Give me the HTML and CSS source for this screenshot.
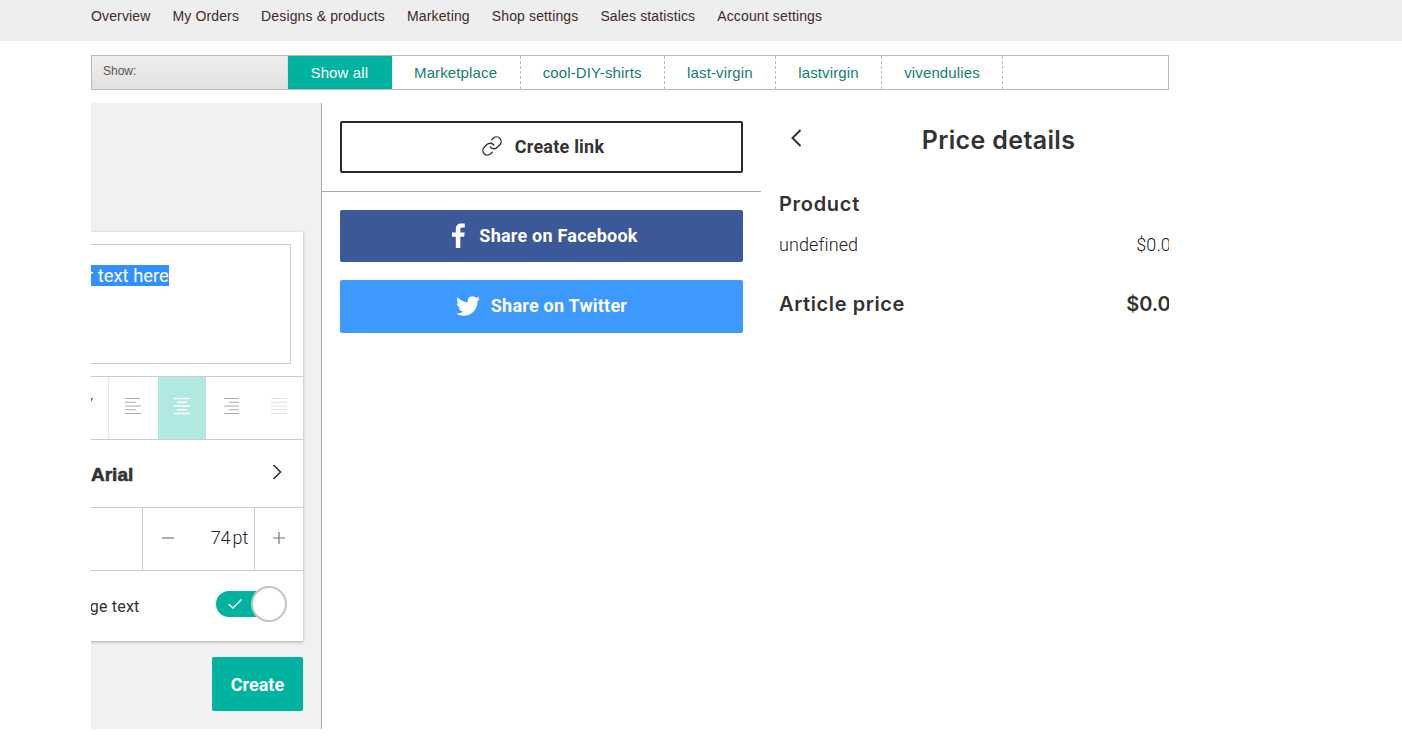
FILE: index.html
```html
<!DOCTYPE html>
<html lang="en">
<head>
<meta charset="utf-8">
<title>Create link</title>
<link rel="stylesheet" href="styles.css">
</head>
<body>
<nav class="topnav">
  <a>Overview</a><a>My Orders</a><a>Designs &amp; products</a><a>Marketing</a><a>Shop settings</a><a>Sales statistics</a><a>Account settings</a>
</nav>
<div class="page">
  <div class="filter">
    <div class="filter-label">Show:</div>
    <a class="tab active">Show all</a>
    <a class="tab">Marketplace</a>
    <a class="tab">cool-DIY-shirts</a>
    <a class="tab">last-virgin</a>
    <a class="tab">lastvirgin</a>
    <a class="tab">vivendulies</a>
  </div>
  <div class="main">
    <section class="editor">
      <div class="card">
        <div class="text-wrap"><div class="text-box"><span class="selected">Enter your text here</span></div></div>
        <div class="row style-row">
          <div class="cell style-cell"><span class="italic-glyph">Y</span></div>
          <div class="cell align-cell"><svg width="17" height="18" viewBox="0 0 17 18"><path d="M0 1.500h15M0 5.250h11M0 9h16M0 12.750h11M0 16.500h16"/></svg></div>
          <div class="cell align-cell on"><svg width="16" height="18" viewBox="0 0 16 18"><path d="M0 1.500h16M3 5.250h10M0 9h16M3 12.750h10M0 16.500h16"/></svg></div>
          <div class="cell align-cell"><svg width="16" height="18" viewBox="0 0 16 18"><path d="M1 1.500h15M6 5.250h10M1 9h15M6 12.750h10M1 16.500h15"/></svg></div>
          <div class="cell align-cell faint"><svg width="16" height="18" viewBox="0 0 16 18"><path d="M0 1.500h16M0 5.250h16M0 9h16M0 12.750h16M0 16.500h16"/></svg></div>
        </div>
        <div class="row font-row">
          <span class="font-name">Arial</span>
          <svg class="chev" width="12" height="18" viewBox="0 0 12 18"><path d="M2.500 2l7 7-7 7"/></svg>
        </div>
        <div class="row size-row">
          <div class="cell size-spacer"></div>
          <div class="cell step"><svg width="14" height="14" viewBox="0 0 14 14"><path d="M1 7h12"/></svg></div>
          <div class="cell size-value">74<span class="unit">pt</span></div>
          <div class="cell step plus"><svg width="14" height="14" viewBox="0 0 14 14"><path d="M1 7h12M7 1v12"/></svg></div>
        </div>
        <div class="row toggle-row">
          <span class="toggle-label">Enlarge text</span>
          <div class="toggle">
            <svg class="toggle-check" width="16" height="12" viewBox="0 0 16 12"><path d="M1.500 6l4.500 4 8.500-8.500"/></svg>
            <span class="knob"></span>
          </div>
        </div>
      </div>
      <div class="actions"><button class="create">Create</button></div>
    </section>
    <section class="share">
      <div class="share-top">
        <button class="btn btn-link">
          <svg width="22" height="22" viewBox="0 0 24 24"><path d="M10 13a5 5 0 0 0 7.540.540l3-3a5 5 0 0 0-7.070-7.070l-1.720 1.710"/><path d="M14 11a5 5 0 0 0-7.540-.540l-3 3a5 5 0 0 0 7.070 7.070l1.710-1.710"/></svg>
          <span>Create link</span>
        </button>
      </div>
      <div class="share-list">
        <button class="btn btn-fb">
          <svg width="16" height="25" viewBox="0 0 16 25"><path d="M10.300 25V13.800h3.800l.6-4.400h-4.400V6.600c0-1.300.4-2.100 2.200-2.100h2.300V.6C14.400.5 13 .4 11.500.4 8.100.4 5.800 2.400 5.800 6.100v3.300H2v4.400h3.800V25z"/></svg>
          <span>Share on Facebook</span>
        </button>
        <button class="btn btn-tw">
          <svg width="24" height="24" viewBox="0 0 24 24"><path d="M23.950 4.570a10 10 0 0 1-2.820.770 4.960 4.960 0 0 0 2.160-2.720c-.950.550-2 .950-3.130 1.180a4.920 4.920 0 0 0-8.380 4.480C7.690 8.090 4.070 6.130 1.640 3.160a4.820 4.820 0 0 0-.660 2.470c0 1.710.870 3.210 2.190 4.100a4.900 4.900 0 0 1-2.230-.620v.060a4.920 4.920 0 0 0 3.950 4.830 5 5 0 0 1-2.210.080 4.940 4.940 0 0 0 4.600 3.420A9.870 9.870 0 0 1 0 19.540a14 14 0 0 0 7.560 2.210c9.050 0 14-7.500 14-13.980 0-.210 0-.420-.020-.630a9.940 9.940 0 0 0 2.410-2.570z"/></svg>
          <span>Share on Twitter</span>
        </button>
      </div>
    </section>
    <section class="price">
      <header class="price-head">
        <svg width="14" height="20" viewBox="0 0 14 20"><path d="M11.500 2l-8 8 8 8"/></svg>
        <h2>Price details</h2>
      </header>
      <h3 class="price-sub">Product</h3>
      <div class="price-row"><span>undefined</span><span>$0.00</span></div>
      <div class="price-total"><span>Article price</span><span class="total-value">$0.00</span></div>
    </section>
  </div>
</div>
</body>
</html>
```
FILE: styles.css
```css
* { box-sizing: border-box; }
html, body { margin: 0; padding: 0; background: #fff; }
body { height: 738px; overflow: hidden; font-family: "Liberation Sans", Arial, sans-serif; color: #333; }

.topnav { height: 41px; background: #eee; padding: 6px 0 0 91px; display: flex; gap: 22px; font-size: 14px; line-height: 20px; letter-spacing: .14px; color: #3f2a2a; }

.page { width: 1078px; margin-left: 91px; }

.filter { margin-top: 14px; height: 35px; border: 1px solid #bbb; display: flex; background: #fff; }
.filter-label { width: 196px; background: linear-gradient(#eeeeee, #e4e0e0); font-size: 12px; color: #555; line-height: 31px; padding-left: 11px; border-right: 1px solid #ddd; }
.tab { font-size: 15px; line-height: 33px; padding: 0 22.500px 0 22px; color: #117f72; border-right: 1px dashed #bbb; letter-spacing: .13px; }
.tab.active { background: #00b2a0; color: #fff; border-right: 0; padding: 0 22.500px; width: 104px; }

.main { display: flex; margin-top: 13px; height: 626px; overflow: hidden; }

.editor { width: 231px; flex: none; background: #f1f1f1; border-right: 1px solid #aaa; padding-top: 129px; overflow: hidden; }
.card { width: 332px; margin-left: -120px; height: 409px; background: #fff; box-shadow: 0 1px 3px rgba(0,0,0,.3); font-family: Roboto, sans-serif; }
.text-wrap { height: 144px; padding: 12px 12px 0 0; }
.text-box { height: 120px; border: 1px solid #ccc; padding: 20px 0 0 38.500px; font-size: 18.400px; font-weight: 400; line-height: 22px; color: #fff; }
.selected { background: #3390ff; }
.row { display: flex; border-top: 1px solid #ccc; }
.cell { display: flex; align-items: center; justify-content: center; }

.style-row { height: 64px; border-bottom: 1px solid #ccc; }
.style-cell { flex: 1; border-right: 1px solid #e8e8e8; justify-content: flex-end; padding: 0 15px 10px 0; font-size: 12px; color: #333; }
.italic-glyph { line-height: 1; }
.align-cell { width: 49px; padding-bottom: 4px; }
.align-cell.on, .align-cell:last-child { width: 48px; }
.align-cell svg { fill: none; stroke: #aaa; stroke-width: 1; }
.align-cell.on { background: #b2e8e2; }
.align-cell.on svg { stroke: #fff; stroke-width: 1.500; }
.align-cell.faint svg { stroke: #e2e2e2; }

.font-row { height: 67px; border-top: 0; align-items: center; padding: 0 20px 0 120px; justify-content: space-between; }
.font-name { font-family: "Liberation Sans", sans-serif; font-weight: 700; font-size: 19px; color: #333; -webkit-text-stroke: .6px #333; margin-top: 2px; }
.chev { fill: none; stroke: #333; stroke-width: 1.600; margin-top: -3px; }

.size-row { height: 64px; border-bottom: 1px solid #ccc; }
.size-spacer { flex: 1; border-right: 1px solid #ccc; }
.step { width: 49px; padding-bottom: 3px; }
.step svg { fill: none; stroke: #777; stroke-width: 1.200; }
.step.plus { width: 48px; }
.size-value { width: 63px; border-right: 1px solid #ccc; font-size: 18px; font-weight: 300; color: #222; padding: 0 0 3px 13px; }
.unit { margin-left: 2px; }

.toggle-row { border-top: 0; height: 69px; align-items: center; padding: 0 16px 0 82px; justify-content: space-between; }
.toggle-label { font-size: 16px; font-weight: 400; color: #333; letter-spacing: .2px; margin-top: 1px; }
.toggle { position: relative; width: 71px; height: 36px; margin-top: -3px; display: flex; align-items: center; }
.toggle::before { content: ""; width: 48px; height: 26px; border-radius: 13px 0 0 13px; background: #00b2a0; }
.toggle-check { position: absolute; left: 11px; top: 12px; fill: none; stroke: #fff; stroke-width: 1.500; }
.knob { position: absolute; right: 0; top: 0; width: 36px; height: 36px; border-radius: 50%; background: #fff; border: 2px solid #c4c4c4; }

.actions { display: flex; justify-content: flex-end; padding: 16px 18px 0 0; }
.create { width: 91px; height: 54px; border: 0; border-radius: 2px; background: #00b2a0; color: #fff; font: 700 18px Roboto, sans-serif; }

.share { width: 439px; flex: none; font-family: Roboto, sans-serif; }
.share-top { height: 89px; padding: 18px 18px 0; border-bottom: 1px solid #aaa; }
.share-list { padding: 18px 18px 0; display: flex; flex-direction: column; gap: 18px; }
.btn { width: 403px; display: flex; align-items: center; justify-content: center; border: 0; border-radius: 2px; font: 700 18px Roboto, sans-serif; color: #fff; padding: 0 0 2px; letter-spacing: .22px; }
.btn svg { flex: none; }
.btn-link { height: 52px; background: #fff; color: #333; border: 2px solid #2b2b2b; gap: 12px; padding-left: 2px; }
.btn-link svg { fill: none; stroke: #333; stroke-width: 1.500; stroke-linecap: round; stroke-linejoin: round; }
.btn-fb { height: 52px; background: #3b5998; gap: 13px; padding-left: 5px; }
.btn-tw { height: 53px; background: #3e99ff; gap: 11px; }
.btn-fb svg, .btn-tw svg { fill: #fff; }

.price { width: 408px; flex: none; overflow: hidden; padding: 0 0 0 18px; color: #333; }
.price-head { position: relative; height: 76px; display: flex; align-items: center; justify-content: center; padding: 0 0 2px; }
.price-head svg { position: absolute; left: 10px; top: 25px; fill: none; stroke: #333; stroke-width: 2; }
.price-head h2 { margin: 0 0 0 49px; font: 600 25px Inter, sans-serif; color: #333; letter-spacing: .35px; }
.price-sub { margin: 12px 0 0; font: 600 20px/26px Inter, sans-serif; color: #333; letter-spacing: .7px; }
.price-row { width: 402px; display: flex; justify-content: space-between; margin-top: 16px; font: 300 18px/24px Roboto, sans-serif; color: #222; letter-spacing: .1px; }
.price-total { width: 405px; display: flex; justify-content: space-between; margin-top: 34px; font: 600 20px/26px Inter, sans-serif; color: #333; letter-spacing: .6px; }
.total-value { letter-spacing: 0; }
```
